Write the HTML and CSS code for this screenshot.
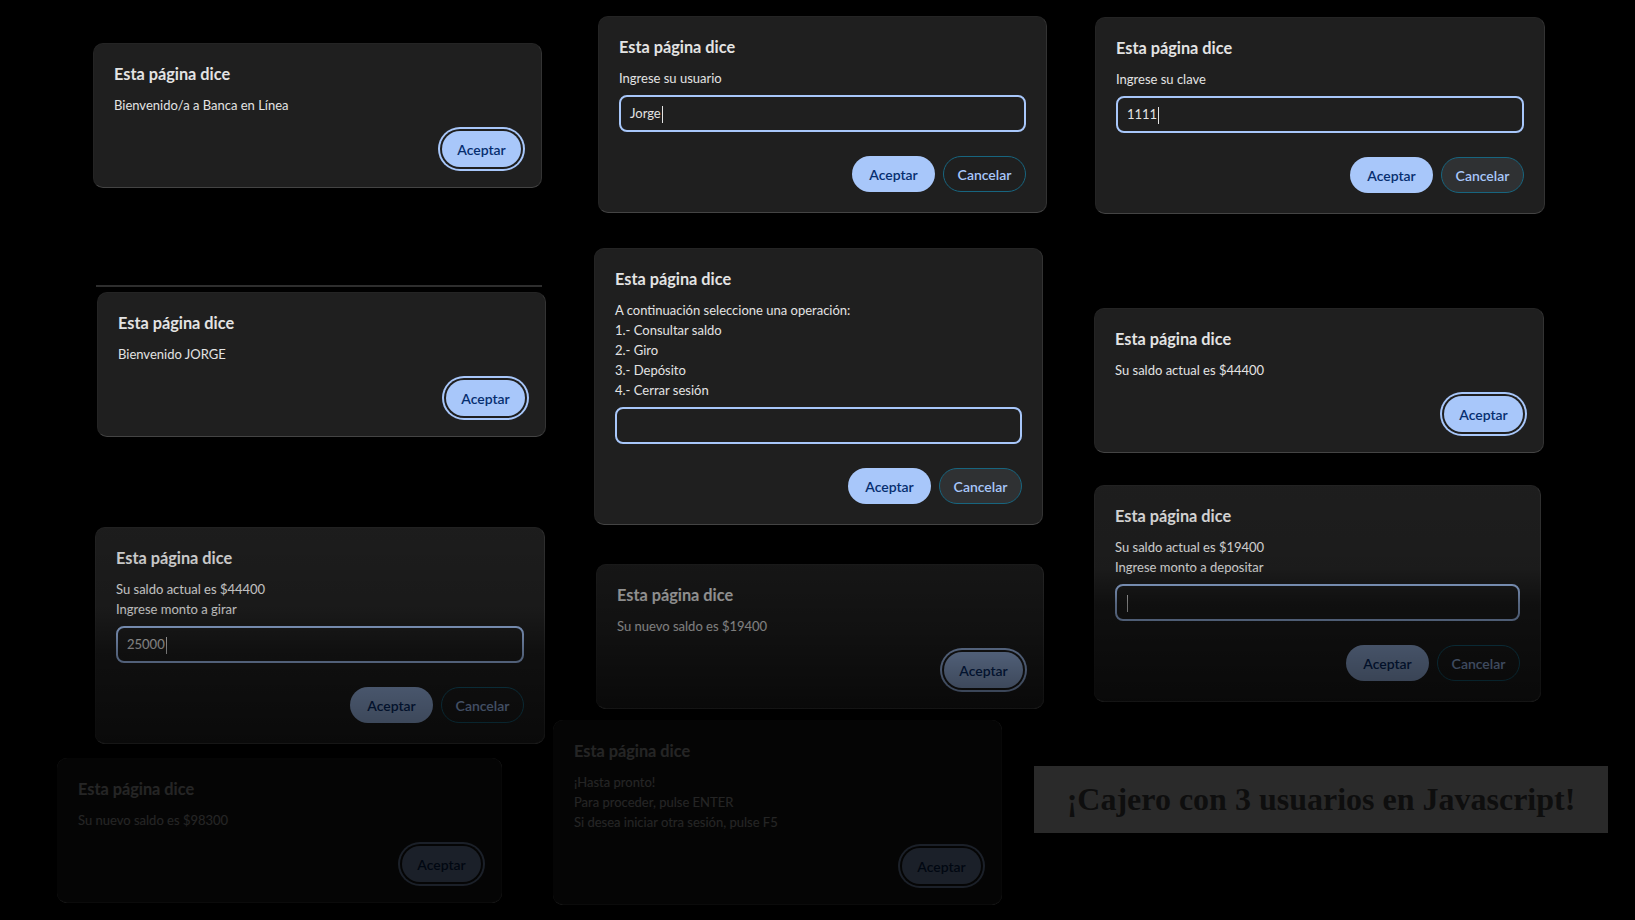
FILE: index.html
```html
<!DOCTYPE html>
<html lang="es">
<head>
<meta charset="utf-8">
<title>Cajero</title>
<link rel="stylesheet" href="styles.css">
</head>
<body>
<main class="canvas">
  <div class="strip s4"></div>

  <section class="dialog d1">
    <h2 class="title">Esta página dice</h2>
    <div class="msg"><p>Bienvenido/a a Banca en Línea</p></div>
    <div class="actions"><button class="btn primary focus">Aceptar</button></div>
  </section>

  <section class="dialog d2">
    <h2 class="title">Esta página dice</h2>
    <div class="msg"><p>Ingrese su usuario</p></div>
    <div class="field">Jorge<span class="caret"></span></div>
    <div class="actions"><button class="btn primary">Aceptar</button><button class="btn secondary">Cancelar</button></div>
  </section>

  <section class="dialog d3">
    <h2 class="title">Esta página dice</h2>
    <div class="msg"><p>Ingrese su clave</p></div>
    <div class="field">1111<span class="caret"></span></div>
    <div class="actions"><button class="btn primary">Aceptar</button><button class="btn secondary hover">Cancelar</button></div>
  </section>

  <section class="dialog d4">
    <h2 class="title">Esta página dice</h2>
    <div class="msg"><p>Bienvenido JORGE</p></div>
    <div class="actions"><button class="btn primary focus">Aceptar</button></div>
  </section>

  <section class="dialog d5">
    <h2 class="title">Esta página dice</h2>
    <div class="msg">
      <p>A continuación seleccione una operación:</p>
      <p>1.- Consultar saldo</p>
      <p>2.- Giro</p>
      <p>3.- Depósito</p>
      <p>4.- Cerrar sesión</p>
    </div>
    <div class="field"></div>
    <div class="actions"><button class="btn primary">Aceptar</button><button class="btn secondary hover">Cancelar</button></div>
  </section>

  <section class="dialog d6">
    <h2 class="title">Esta página dice</h2>
    <div class="msg"><p>Su saldo actual es $44400</p></div>
    <div class="actions"><button class="btn primary focus">Aceptar</button></div>
  </section>

  <section class="dialog d7 fade-a">
    <h2 class="title">Esta página dice</h2>
    <div class="msg">
      <p>Su saldo actual es $44400</p>
      <p>Ingrese monto a girar</p>
    </div>
    <div class="field">25000<span class="caret"></span></div>
    <div class="actions"><button class="btn primary">Aceptar</button><button class="btn secondary">Cancelar</button></div>
  </section>

  <section class="dialog d8 fade-b">
    <h2 class="title">Esta página dice</h2>
    <div class="msg"><p>Su nuevo saldo es $19400</p></div>
    <div class="actions"><button class="btn primary focus">Aceptar</button></div>
  </section>

  <section class="dialog d9 fade-c">
    <h2 class="title">Esta página dice</h2>
    <div class="msg">
      <p>Su saldo actual es $19400</p>
      <p>Ingrese monto a depositar</p>
    </div>
    <div class="field"><span class="caret"></span></div>
    <div class="actions"><button class="btn primary">Aceptar</button><button class="btn secondary">Cancelar</button></div>
  </section>

  <section class="dialog d10 fade-d">
    <h2 class="title">Esta página dice</h2>
    <div class="msg"><p>Su nuevo saldo es $98300</p></div>
    <div class="actions"><button class="btn primary focus">Aceptar</button></div>
  </section>

  <section class="dialog d11 fade-d">
    <h2 class="title">Esta página dice</h2>
    <div class="msg">
      <p>¡Hasta pronto!</p>
      <p>Para proceder, pulse ENTER</p>
      <p>Si desea iniciar otra sesión, pulse F5</p>
    </div>
    <div class="actions"><button class="btn primary focus">Aceptar</button></div>
  </section>

  <div class="banner">¡Cajero con 3 usuarios en Javascript!</div>
</main>
</body>
</html>
```

FILE: styles.css
```css
* { box-sizing: border-box; margin: 0; padding: 0; }

html, body {
  width: 1635px;
  height: 920px;
  background: #000;
  overflow: hidden;
}

body {
  font-family: Lato, "Noto Sans", sans-serif;
  color: #e3e3e3;
}

.canvas {
  position: relative;
  width: 1635px;
  height: 920px;
}

/* ---------- dialog ---------- */
.dialog {
  position: absolute;
  width: 449px;
  padding: 18px 20px 20px;
  background: #1f1f1f;
  border: 1px solid #242424;
  border-bottom-color: #444;
  border-right-color: #333;
  border-radius: 10px;
}

.title {
  font-size: 16.3px;
  line-height: 24px;
  font-weight: 700;
  color: #e3e3e3;
}

.msg {
  margin-top: 9px;
  font-size: 13px;
  line-height: 20px;
  color: #e3e3e3;
}

.field {
  margin-top: 7px;
  height: 37px;
  border: 2px solid #a8c7fa;
  border-radius: 8px;
  padding: 0 9px;
  font-size: 13px;
  line-height: 33px;
  color: #e3e3e3;
}

.caret {
  display: inline-block;
  width: 1px;
  height: 17px;
  margin-left: 1px;
  background: #e3e3e3;
  vertical-align: middle;
}

.actions {
  margin-top: 16px;
  display: flex;
  justify-content: flex-end;
  gap: 8px;
}

.field + .actions { margin-top: 24px; }

.btn {
  width: 83px;
  height: 36px;
  border-radius: 18px;
  font-family: Lato, "Noto Sans", sans-serif;
  font-size: 14px;
  font-weight: 600;
  cursor: pointer;
}

.primary {
  background: #a8c7fa;
  color: #062e6f;
  border: none;
}

.primary.focus {
  width: 79px;
  box-shadow: 0 0 0 2px #1f1f1f, 0 0 0 4px #a8c7fa;
}

.secondary {
  background: transparent;
  color: #a8c7fa;
  border: 1px solid #17657f;
}

.secondary.hover { background: #2f3133; }

/* fading dialogs */
.fade-a::after,
.fade-b::after,
.fade-c::after,
.fade-d::after {
  content: "";
  position: absolute;
  inset: -1px;
  border-radius: 10px;
  pointer-events: none;
}

.fade-a::after {
  background: linear-gradient(rgba(0,0,0,0.08) 0%, rgba(0,0,0,0.18) 38%, rgba(0,0,0,0.5) 58%, rgba(0,0,0,0.68) 100%);
}
.fade-b::after {
  background: linear-gradient(rgba(0,0,0,0.3) 0%, rgba(0,0,0,0.45) 45%, rgba(0,0,0,0.7) 100%);
}
.fade-c::after {
  background: linear-gradient(rgba(0,0,0,0.05) 0%, rgba(0,0,0,0.12) 38%, rgba(0,0,0,0.5) 55%, rgba(0,0,0,0.7) 100%);
}
.fade-d::after {
  background: rgba(0,0,0,0.84);
}

/* placement on the collage canvas */
.d1  { left: 93px;   top: 43px;  }
.d2  { left: 598px;  top: 16px;  }
.d3  { left: 1095px; top: 17px;  width: 450px; }
.d4  { left: 97px;   top: 292px; }
.d5  { left: 594px;  top: 248px; }
.d6  { left: 1094px; top: 308px; width: 450px; }
.d7  { left: 95px;   top: 527px; width: 450px; }
.d8  { left: 596px;  top: 564px; width: 448px; }
.d9  { left: 1094px; top: 485px; width: 447px; }
.d10 { left: 57px;   top: 758px; width: 445px; }
.d11 { left: 553px;  top: 720px; }

.strip {
  position: absolute;
  height: 2px;
  background: #2e2e2e;
}
.s4 { left: 96px; top: 285px; width: 446px; }

/* banner */
.banner {
  position: absolute;
  left: 1034px;
  top: 766px;
  width: 574px;
  height: 67px;
  background: #2a2a2a;
  display: flex;
  align-items: center;
  justify-content: center;
  font-family: "Liberation Serif", "Times New Roman", serif;
  font-weight: 700;
  font-size: 32px;
  color: #0e0e0e;
}
```
